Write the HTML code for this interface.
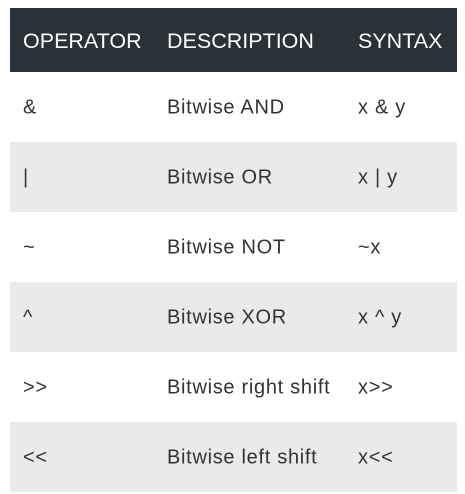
<!DOCTYPE html>
<html><head><style>
body{margin:0;background:#fff;width:465px;height:494px;overflow:hidden;font-family:"Liberation Sans",sans-serif;}
.t{position:absolute;left:10px;top:8px;width:447px;}
.r{position:relative;height:70px;}
.h{height:64px;background:#2a3238;color:#fff;font-size:21.5px;}
.g{background:#eaeaea;}
.r span{position:absolute;top:50%;transform:translateY(-45%);white-space:nowrap;}
.r span.a{left:13px}.r span.b{left:157px}.r span.c{left:348px}
.b2{color:#333;font-size:20px;letter-spacing:0.7px;}
</style></head><body>
<div class="t">
<div class="r h"><span class="a">OPERATOR</span><span class="b">DESCRIPTION</span><span class="c">SYNTAX</span></div>
<div class="r b2"><span class="a">&amp;</span><span class="b">Bitwise AND</span><span class="c">x &amp; y</span></div>
<div class="r b2 g"><span class="a">|</span><span class="b">Bitwise OR</span><span class="c">x | y</span></div>
<div class="r b2"><span class="a">~</span><span class="b">Bitwise NOT</span><span class="c">~x</span></div>
<div class="r b2 g"><span class="a">^</span><span class="b">Bitwise XOR</span><span class="c">x ^ y</span></div>
<div class="r b2"><span class="a">&gt;&gt;</span><span class="b">Bitwise right shift</span><span class="c">x&gt;&gt;</span></div>
<div class="r b2 g"><span class="a">&lt;&lt;</span><span class="b">Bitwise left shift</span><span class="c">x&lt;&lt;</span></div>
</div>
</body></html>
